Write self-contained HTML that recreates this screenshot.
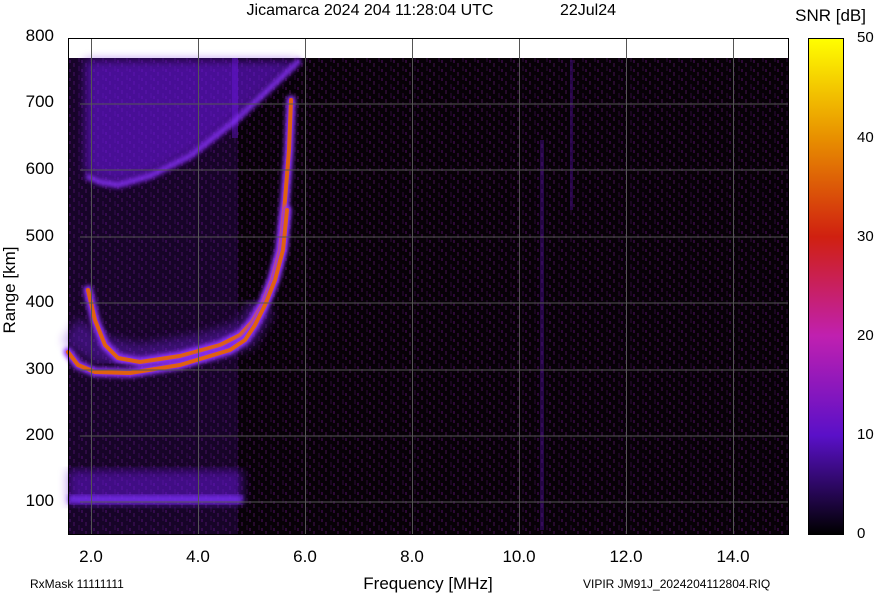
<!DOCTYPE html>
<html><head><style>
body{margin:0;background:#fff;width:874px;height:595px;overflow:hidden}
svg text{font-family:"Liberation Sans",sans-serif;fill:#000}
</style></head><body>
<svg width="874" height="595" viewBox="0 0 874 595" xmlns="http://www.w3.org/2000/svg">
<defs>
<linearGradient id="cb" x1="0" y1="1" x2="0" y2="0">
<stop offset="0" stop-color="#000"/>
<stop offset="0.2" stop-color="#5a10c8"/>
<stop offset="0.4" stop-color="#c020b0"/>
<stop offset="0.6" stop-color="#d02010"/>
<stop offset="0.8" stop-color="#e89000"/>
<stop offset="1" stop-color="#ffff00"/>
</linearGradient>
<pattern id="noise" width="12" height="9" patternUnits="userSpaceOnUse">
<rect width="12" height="9" fill="#070107"/>
<rect x="1" y="0" width="2" height="4" fill="#260a2c"/>
<rect x="6" y="3" width="2" height="5" fill="#1a0620"/>
<rect x="9" y="6" width="2" height="3" fill="#2c0836"/>
</pattern>
<filter id="bl"><feGaussianBlur stdDeviation="2"/></filter>
<filter id="bl2"><feGaussianBlur stdDeviation="5"/></filter>
</defs>
<rect x="68" y="58" width="721" height="477" fill="url(#noise)"/>
<g fill="#5010a0">
<rect x="68" y="58" width="170" height="477" opacity="0.22"/>
<rect x="232" y="58" width="6" height="80" opacity="0.6"/>
<rect x="540" y="140" width="4" height="390" opacity="0.4"/>
<rect x="570" y="60" width="3" height="150" opacity="0.4"/>
</g>
<!-- F2 spread upper -->
<path d="M85,60 L85,172 L100,180 L118,184 L150,175 L190,155 L236,120 L300,60 Z" fill="#6a18e0" opacity="0.6" filter="url(#bl2)"/>
<path d="M86,176 L100,182 L118,185 L150,176 L190,156 L236,120 L268,90 L300,60" stroke="#8a30ff" stroke-width="6" fill="none" opacity="0.8" filter="url(#bl)" stroke-linejoin="round"/>
<!-- diffuse glow around traces -->
<path d="M70,330 L100,350 L140,358 L200,348 L245,335 L262,305" stroke="#7020e0" stroke-width="28" fill="none" opacity="0.4" filter="url(#bl2)" stroke-linejoin="round"/>
<!-- E band -->
<rect x="68" y="470" width="175" height="35" fill="#6a18e0" opacity="0.5" filter="url(#bl2)"/>
<rect x="68" y="495" width="175" height="9" fill="#8030ff" opacity="0.7" filter="url(#bl)"/>
<!-- traces -->
<g fill="none" stroke-linejoin="round" stroke-linecap="round">
<polyline points="88,290 95,320 105,345 118,358 140,362 180,356 220,345 240,335 252,322 262,305 272,280 280,250 285,200 289,150 291,100" stroke="#9030ff" stroke-width="9" filter="url(#bl)"/>
<polyline points="88,290 95,320 105,345 118,358 140,362 180,356 220,345 240,335 252,322 262,305 272,280 280,250 285,200 289,150 291,100" stroke="#e06010" stroke-width="4"/>
<polyline points="68,352 78,365 95,372 130,373 180,365 230,350 245,340 255,325 265,305 275,280 283,250 287,210" stroke="#9030ff" stroke-width="9" filter="url(#bl)"/>
<polyline points="68,352 78,365 95,372 130,373 180,365 230,350 245,340 255,325 265,305 275,280 283,250 287,210" stroke="#e06010" stroke-width="4"/>
</g>
<!-- grid -->
<g stroke="#555" stroke-width="1">
<line x1="80" y1="104" x2="789" y2="104"/><line x1="80" y1="170" x2="789" y2="170"/>
<line x1="80" y1="237" x2="789" y2="237"/><line x1="80" y1="303" x2="789" y2="303"/>
<line x1="80" y1="370" x2="789" y2="370"/><line x1="80" y1="436" x2="789" y2="436"/>
<line x1="80" y1="502" x2="789" y2="502"/>
<line x1="91.5" y1="38" x2="91.5" y2="535"/><line x1="198.5" y1="38" x2="198.5" y2="535"/>
<line x1="305.5" y1="38" x2="305.5" y2="535"/><line x1="412.5" y1="38" x2="412.5" y2="535"/>
<line x1="519.5" y1="38" x2="519.5" y2="535"/><line x1="626.5" y1="38" x2="626.5" y2="535"/>
<line x1="733.5" y1="38" x2="733.5" y2="535"/>
</g>
<rect x="68.5" y="38.5" width="720" height="496" fill="none" stroke="#000"/>
<text x="370" y="15" font-size="16" text-anchor="middle">Jicamarca 2024 204 11:28:04 UTC</text>
<text x="588" y="15" font-size="16" text-anchor="middle">22Jul24</text>
<g font-size="17" text-anchor="end">
<text x="54" y="41">800</text><text x="54" y="107">700</text><text x="54" y="174">600</text>
<text x="54" y="241">500</text><text x="54" y="307">400</text><text x="54" y="374">300</text>
<text x="54" y="440">200</text><text x="54" y="506">100</text>
</g>
<g font-size="17" text-anchor="middle">
<text x="91" y="562">2.0</text><text x="198" y="562">4.0</text><text x="305" y="562">6.0</text>
<text x="412" y="562">8.0</text><text x="519" y="562">10.0</text><text x="626" y="562">12.0</text>
<text x="733" y="562">14.0</text>
</g>
<text x="428" y="589" font-size="17" text-anchor="middle">Frequency [MHz]</text>
<text x="30" y="588" font-size="12">RxMask 11111111</text>
<text x="583" y="588" font-size="12">VIPIR  JM91J_2024204112804.RIQ</text>
<text transform="translate(15,290) rotate(-90)" font-size="17" text-anchor="middle">Range [km]</text>
<text x="866" y="21" font-size="17" text-anchor="end">SNR [dB]</text>
<rect x="808.5" y="38.5" width="35" height="496" fill="url(#cb)" stroke="#000"/>
<g font-size="15">
<text x="857" y="42">50</text><text x="857" y="142">40</text><text x="857" y="241">30</text>
<text x="857" y="340">20</text><text x="857" y="439">10</text><text x="857" y="538">0</text>
</g>
</svg>
</body></html>
